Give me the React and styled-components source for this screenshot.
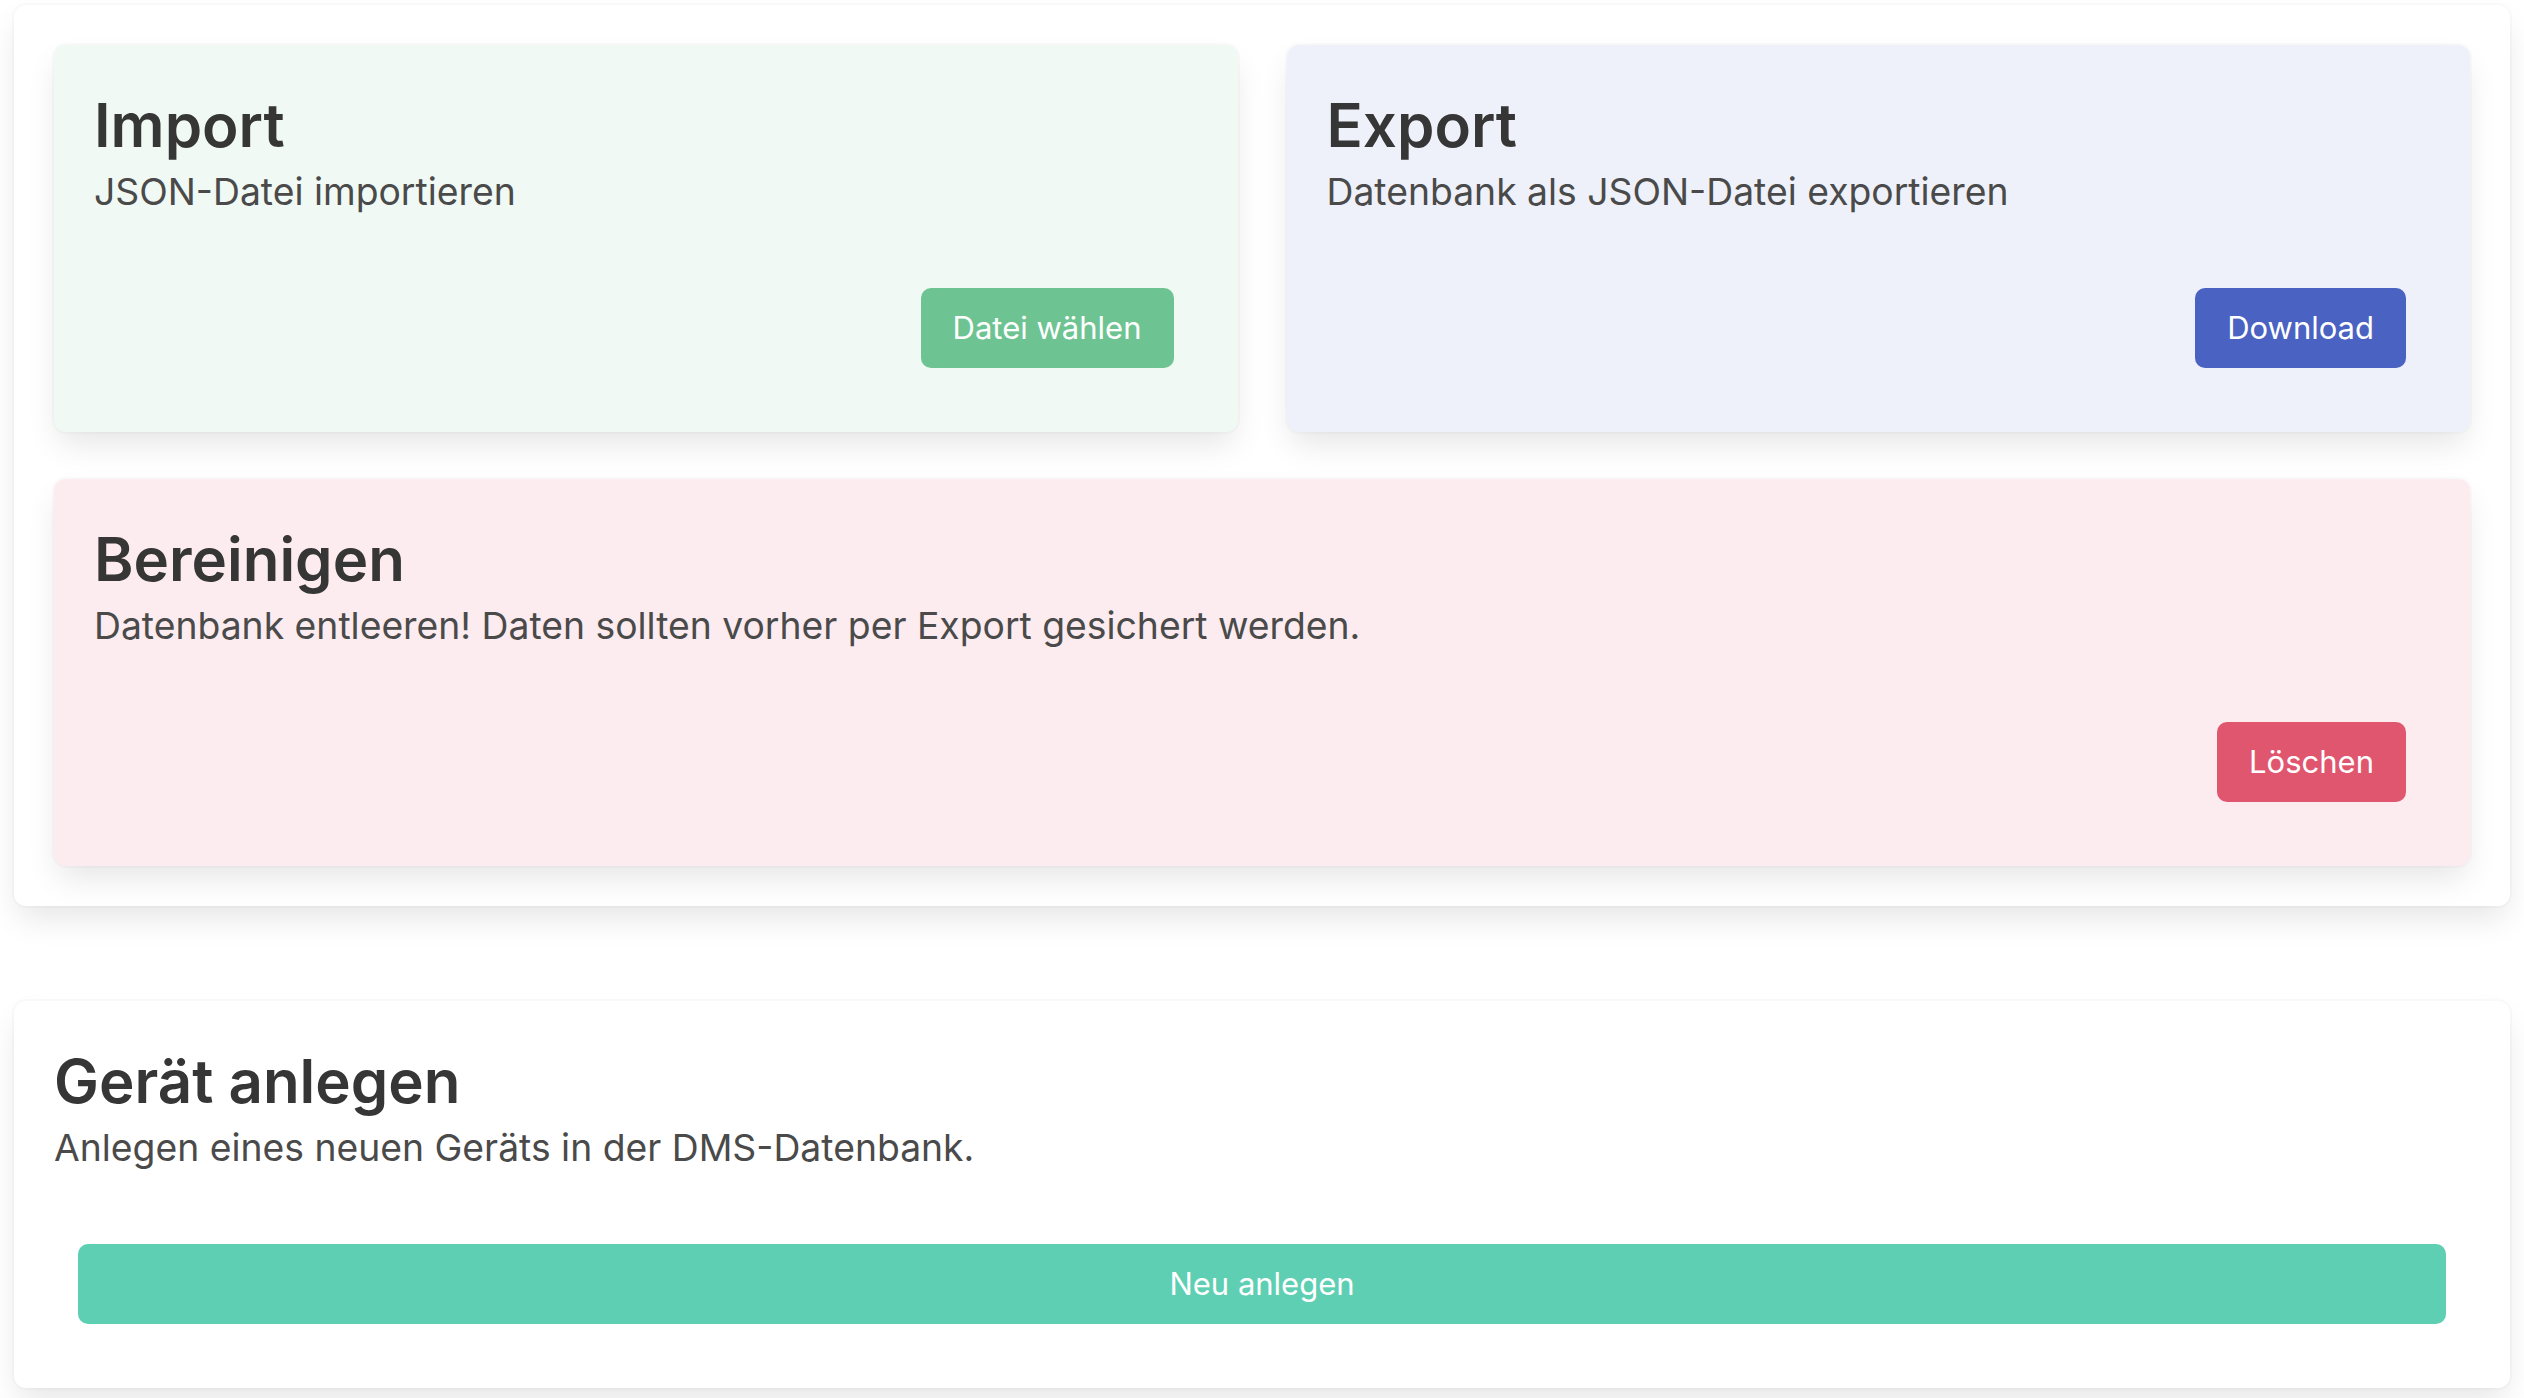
import React from "react";
import styled, { createGlobalStyle } from "styled-components";

const Global = createGlobalStyle`
  html, body {
    margin: 0;
    padding: 0;
    background: #ffffff;
  }
  body {
    font-family: Inter, "Noto Sans", "Liberation Sans", sans-serif;
    color: #4a4a4a;
  }
`;

const Page = styled.div`
  display: flex;
  flex-direction: column;
  gap: 95px;
  padding: 5px 14px 10px 14px;
`;

const Box = styled.section`
  background: #ffffff;
  border-radius: 12px;
  padding: 40px;
  box-shadow: 0 16px 32px -4px rgba(10, 10, 10, 0.1), 0 0 0 2px rgba(10, 10, 10, 0.02);
`;

const Grid = styled.div`
  display: grid;
  grid-template-columns: 1fr 1fr;
  column-gap: 49px;
  row-gap: 47px;
`;

const Tile = styled.div`
  grid-column: ${(p) => (p.$wide ? "1 / -1" : "auto")};
  background: ${(p) => p.$bg};
  border-radius: 12px;
  padding: 40px;
  display: flex;
  flex-direction: column;
  box-shadow: 0 16px 32px -4px rgba(10, 10, 10, 0.1), 0 0 0 2px rgba(10, 10, 10, 0.02);
`;

const Title = styled.h2`
  margin: 4px 0 0 0;
  font-size: 60px;
  line-height: 72px;
  font-weight: 600;
  color: #363636;
`;

const Subtitle = styled.p`
  margin: 7px 0 0 0;
  font-size: 37.3px;
  line-height: 48px;
  font-weight: 400;
  color: #4a4a4a;
`;

const Actions = styled.div`
  margin-top: 48px;
  padding: 24px;
  display: flex;
  justify-content: ${(p) => (p.$stretch ? "stretch" : "flex-end")};
`;

const Button = styled.button`
  font-family: inherit;
  font-size: 31px;
  line-height: 48px;
  height: 80px;
  padding: 15px 31px;
  border: 1px solid transparent;
  border-radius: 10px;
  background: ${(p) => p.$color};
  color: #ffffff;
  cursor: pointer;
  flex: ${(p) => (p.$stretch ? "1" : "none")};
  text-align: center;
  box-sizing: border-box;
`;

export default function App() {
  return (
    <>
      <Global />
      <Page>
        <Box>
          <Grid>
            <Tile $bg="#f0f9f4">
              <Title>Import</Title>
              <Subtitle>JSON-Datei importieren</Subtitle>
              <Actions>
                <Button $color="#6dc492">Datei wählen</Button>
              </Actions>
            </Tile>
            <Tile $bg="#eef1f9">
              <Title>Export</Title>
              <Subtitle>Datenbank als JSON-Datei exportieren</Subtitle>
              <Actions>
                <Button $color="#4a62c1">Download</Button>
              </Actions>
            </Tile>
            <Tile $wide $bg="#fcecef">
              <Title>Bereinigen</Title>
              <Subtitle>
                Datenbank entleeren! Daten sollten vorher per Export gesichert werden.
              </Subtitle>
              <Actions>
                <Button $color="#df566e">Löschen</Button>
              </Actions>
            </Tile>
          </Grid>
        </Box>
        <Box>
          <Title>Gerät anlegen</Title>
          <Subtitle>Anlegen eines neuen Geräts in der DMS-Datenbank.</Subtitle>
          <Actions $stretch>
            <Button $stretch $color="#5ecfb3">Neu anlegen</Button>
          </Actions>
        </Box>
      </Page>
    </>
  );
}
